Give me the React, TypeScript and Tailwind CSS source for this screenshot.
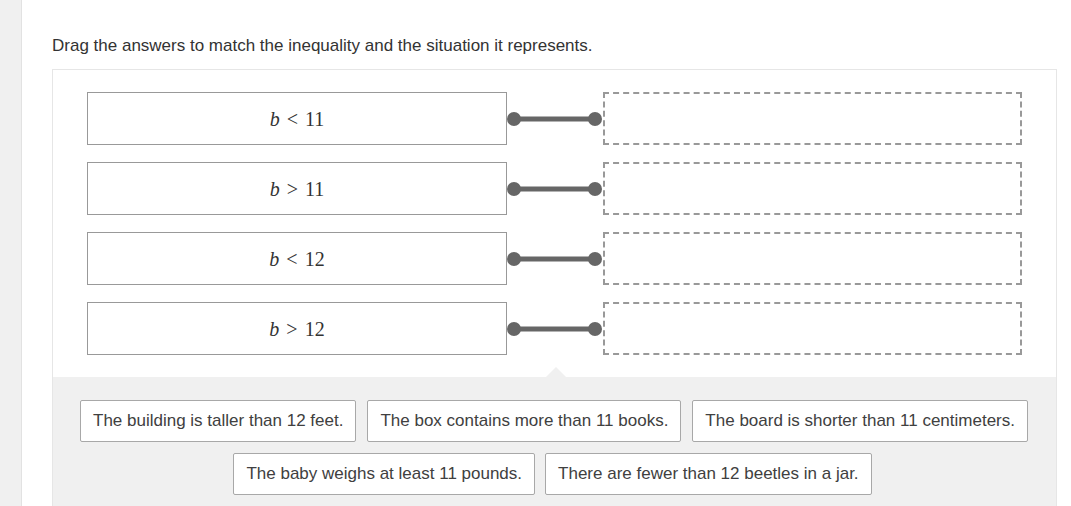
import React from "react";

const rows = ["11", "11", "12", "12"];
const ops = ["<", ">", "<", ">"];

const chipsTop = [
  "The building is taller than 12 feet.",
  "The box contains more than 11 books.",
  "The board is shorter than 11 centimeters.",
];
const chipsBottom = [
  "The baby weighs at least 11 pounds.",
  "There are fewer than 12 beetles in a jar.",
];

function Connector() {
  return (
    <svg width="96" height="52" viewBox="0 0 96 52" className="shrink-0">
      <line x1="7" y1="26" x2="88" y2="26" stroke="#666" strokeWidth="5" />
      <circle cx="7" cy="26" r="7" fill="#666" />
      <circle cx="88" cy="26" r="7" fill="#666" />
    </svg>
  );
}

function Chip({ text }: { text: string }) {
  return (
    <div className="h-[42px] px-[12px] flex items-center bg-white border border-[#a8a8a8] rounded-[2px] text-[17px] text-[#404040] whitespace-nowrap">
      {text}
    </div>
  );
}

export default function App() {
  return (
    <div className="w-[1071px] h-[506px] flex bg-white overflow-hidden" style={{ fontFamily: '"Liberation Sans", Arial, sans-serif' }}>
      {/* left rail */}
      <div className="w-[22px] h-full bg-[#f0f0f0] border-r border-[#e2e2e2] shrink-0" />

      <div className="pl-[30px] pt-[36px]">
        <p className="text-[17px] leading-[20px] text-[#333]">
          Drag the answers to match the inequality and the situation it represents.
        </p>

        <div className="mt-[13px] w-[1005px] border border-[#e6e6e6] border-b-0">
          {/* matching rows */}
          <div className="pl-[34px] pt-[22px] pb-[22px] flex flex-col gap-[17px]">
            {rows.map((n, i) => (
              <div key={i} className="flex items-center">
                <div
                  className="w-[420px] h-[53px] border border-[#999] flex items-center justify-center text-[20px] text-[#333]"
                  style={{ fontFamily: '"Liberation Serif", "Times New Roman", serif' }}
                >
                  <span className="italic">b</span>
                  <span className="mx-[7px]">{ops[i]}</span>
                  <span>{n}</span>
                </div>
                <Connector />
                <div className="w-[419px] h-[53px] border-2 border-dashed border-[#999]" />
              </div>
            ))}
          </div>

          {/* answer bank */}
          <div className="relative bg-[#f0f0f0] pt-[23px] pb-[20px] flex flex-col items-center gap-[11px]">
            <div className="absolute left-[493px] -top-[10px] w-0 h-0 border-l-[10px] border-r-[10px] border-b-[10px] border-l-transparent border-r-transparent border-b-[#f0f0f0]" />
            <div className="flex gap-[11px] -ml-[1px]">
              {chipsTop.map((c) => (
                <Chip key={c} text={c} />
              ))}
            </div>
            <div className="flex gap-[10px] -ml-[4px]">
              {chipsBottom.map((c) => (
                <Chip key={c} text={c} />
              ))}
            </div>
          </div>
        </div>
      </div>
    </div>
  );
}
